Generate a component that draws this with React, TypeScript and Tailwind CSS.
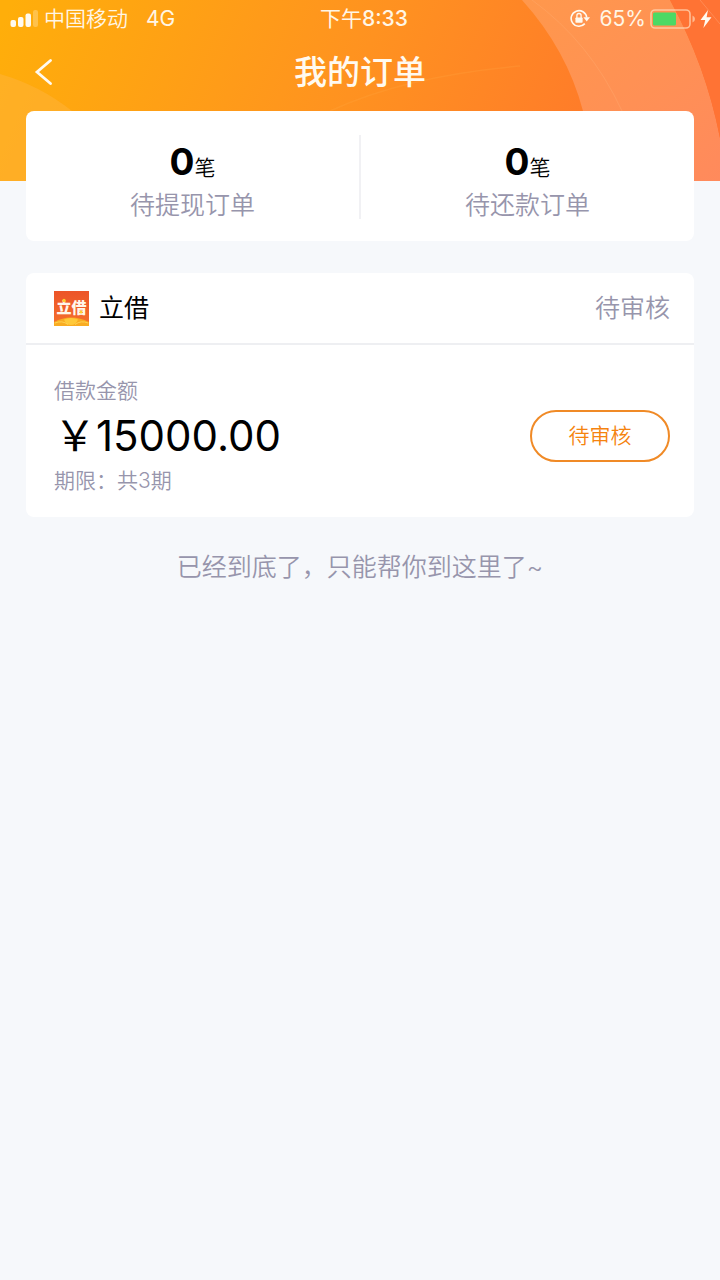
import React from "react";

function HeaderBackdrop() {
  return (
    <svg
      aria-hidden="true"
      className="absolute inset-0 h-full w-full"
      viewBox="0 0 720 181"
      preserveAspectRatio="none"
    >
      <defs>
        <linearGradient id="sky" gradientUnits="userSpaceOnUse" x1="20" y1="-20" x2="660" y2="250">
          <stop offset="0" stopColor="#ffae0a" />
          <stop offset="0.5" stopColor="#ff9220" />
          <stop offset="1" stopColor="#ff702e" />
        </linearGradient>
        <linearGradient id="band" x1="0" y1="0" x2="1" y2="1">
          <stop offset="0" stopColor="#ff984c" />
          <stop offset="1" stopColor="#ff8a5c" />
        </linearGradient>
      </defs>
      <rect width="720" height="181" fill="url(#sky)" />
      <path d="M0 74Q39 85 72 111L120 181H0Z" fill="#ffb43c" fillOpacity="0.5" />
      <path d="M522 0Q567 50 583 111L592 181H720V138Q706 66 670 0Z" fill="url(#band)" />
      <path d="M670 0Q706 66 720 138V0Z" fill="#ff7334" />
      <path d="M532 0Q590 42 622 111" fill="none" stroke="#ffb27c" strokeOpacity="0.3" />
      <path d="M700 0L720 24" stroke="#ffa174" strokeOpacity="0.5" />
      <path d="M330 111Q405 76 520 66" fill="none" stroke="#ffb04c" strokeOpacity="0.2" strokeWidth="1.5" />
    </svg>
  );
}

function SignalIcon() {
  return (
    <svg className="h-[18px] w-7 shrink-0" viewBox="0 0 28 18" fill="#fffaf0" role="img" aria-label="信号">
      <rect x="0.500" y="10" width="5.500" height="7" rx="2" />
      <rect x="8" y="7" width="5.500" height="10" rx="2" />
      <rect x="15.500" y="3.500" width="5.500" height="13.500" rx="2" />
      <rect x="23" y="0" width="5" height="17" rx="2" opacity="0.28" />
    </svg>
  );
}

function RotationLockIcon() {
  return (
    <svg className="h-5 w-5" viewBox="0 0 20 20" fill="none" stroke="#fffaf0" role="img" aria-label="方向锁定">
      <path d="M14.8 14.600A7.800 7.800 0 1 1 16.700 8.500" strokeWidth="1.6" />
      <path d="M13.400 8.300H20L16.700 12.600Z" fill="#fffaf0" stroke="none" />
      <rect x="5.400" y="8.400" width="7.200" height="5.400" rx="0.8" fill="#fffaf0" stroke="none" />
      <path d="M6.900 9V6.600A2.100 2.100 0 0 1 11.100 6.600V9" strokeWidth="1.3" />
    </svg>
  );
}

function BatteryIcon() {
  return (
    <svg className="h-5 w-[45px]" viewBox="0 0 45 20" fill="none" role="img" aria-label="电量">
      <rect x="1" y="1" width="39" height="18" rx="4" stroke="#ffd9b8" strokeOpacity="0.75" strokeWidth="1.6" />
      <path d="M42.500 6.500Q45 7.500 45 10T42.500 13.500Z" fill="#ffd9b8" fillOpacity="0.7" />
      <rect x="3" y="3.500" width="23" height="13" rx="1.500" fill="#4cd964" />
    </svg>
  );
}

function BoltIcon() {
  return (
    <svg className="h-[18px] w-3" viewBox="0 0 12 18" fill="#fffaf0" role="img" aria-label="充电中">
      <path d="M8 0L0.500 10H5.200L3.400 18L11.500 7.200H6.600Z" />
    </svg>
  );
}

function BrandLogo() {
  return (
    <svg className="h-[35px] w-[35px] shrink-0" viewBox="0 0 35 35" role="img" aria-label="立借">
      <defs>
        <linearGradient id="brand" x1="0" y1="0" x2="0" y2="1">
          <stop offset="0" stopColor="#ec5428" />
          <stop offset="1" stopColor="#f5702c" />
        </linearGradient>
      </defs>
      <rect width="35" height="35" fill="url(#brand)" />
      <path d="M0 31Q17 22 35 31V35H0Z" fill="#f9ac22" />
      <path d="M10 28.500Q17 25.500 24 28.500Q22 34 17 34T10 28.500Z" fill="#ffc93a" />
      <path d="M1 32Q8 29 14 33.500M34 32Q27 29 21 33.500" fill="none" stroke="#ffda5c" strokeWidth="0.8" />
      <text
        x="17.500"
        y="22"
        textAnchor="middle"
        fontSize="15"
        fontWeight="900"
        fontFamily="'Noto Sans CJK SC', sans-serif"
        fill="#fff7ea"
      >
        立借
      </text>
      <circle cx="10" cy="9.500" r="1.700" fill="#ffcf2e" />
      <circle cx="27" cy="21" r="1.500" fill="#ffcf2e" />
    </svg>
  );
}

function StatusBar() {
  return (
    <div className="grid h-[37px] grid-cols-[1fr_auto_1fr] items-center pr-2 pl-[10px] text-[21px] leading-[37px] text-[#fff6e6]">
      <div className="flex items-center">
        <SignalIcon />
        <span className="ml-[6px] font-[350]">中国移动</span>
        <span className="ml-[18px]">4G</span>
      </div>
      <div className="pl-[6px]">
        下午<span className="font-medium">8:33</span>
      </div>
      <div className="flex items-center justify-end">
        <RotationLockIcon />
        <span className="ml-[10px]">65%</span>
        <span className="ml-1 flex items-center gap-[5px]">
          <BatteryIcon />
          <BoltIcon />
        </span>
      </div>
    </div>
  );
}

function Stat({ count, label }: { count: number; label: string }) {
  return (
    <a href="#orders" className="flex flex-1 flex-col items-center pt-[29px]">
      <span className="flex h-[47px] items-baseline text-black">
        <strong className="text-[37px] leading-[44px] font-bold">{count}</strong>
        <span className="text-[21px] leading-[30px] font-[350]">笔</span>
      </span>
      <span className="text-[25px] leading-[36px] font-[350] text-[#9795ac]">{label}</span>
    </a>
  );
}

export default function App() {
  return (
    <div className="min-h-screen bg-[#f6f8fb] font-[Inter,'Noto_Sans_CJK_SC',sans-serif]">
      <header className="relative h-[181px]">
        <HeaderBackdrop />
        <div className="relative">
          <StatusBar />
          <div className="grid h-[70px] grid-cols-[1fr_auto_1fr] items-center">
            <button type="button" aria-label="返回" className="ml-[34px] h-[26px] w-5 justify-self-start">
              <svg className="h-[26px] w-5" viewBox="0 0 20 26" fill="none" stroke="#fffaf0" strokeWidth="2.8" strokeLinecap="round">
                <path d="M16.500 1.500L3 13L16.500 24.500" />
              </svg>
            </button>
            <h1 className="text-[33px] leading-[48px] font-medium text-[#fffaf0]">我的订单</h1>
          </div>
        </div>
      </header>

      <main id="orders" className="relative -mt-[70px] flex flex-col gap-8 px-[26px]">
        <section className="flex h-[130px] rounded-lg bg-white">
          <Stat count={0} label="待提现订单" />
          <div className="mt-6 h-[84px] w-[2px] bg-[#f1f1f4]" />
          <Stat count={0} label="待还款订单" />
        </section>

        <article className="rounded-lg bg-white">
          <div className="flex h-[72px] items-center border-b-2 border-[#eeeff2] pr-6 pl-7">
            <BrandLogo />
            <h2 className="ml-[10px] text-[25px] leading-9 text-black">立借</h2>
            <span className="ml-auto text-[25px] leading-9 font-[350] text-[#9795ac]">待审核</span>
          </div>
          <div className="flex items-center justify-between pt-[30px] pr-6 pb-[20px] pl-7">
            <div className="text-[21px] leading-[32px] font-[350] text-[#9795ac]">
              <p>借款金额</p>
              <p className="text-[42px] leading-[58px] font-normal text-black">￥15000.00</p>
              <p>期限：共3期</p>
            </div>
            <button
              type="button"
              className="h-[52px] w-[140px] rounded-full border-2 border-[#f08a26] text-[21px] leading-[30px] font-[350] text-[#f5830f]"
            >
              待审核
            </button>
          </div>
        </article>

        <p className="text-center text-[25px] leading-9 font-[350] text-[#9795ac]">已经到底了，只能帮你到这里了~</p>
      </main>
    </div>
  );
}
